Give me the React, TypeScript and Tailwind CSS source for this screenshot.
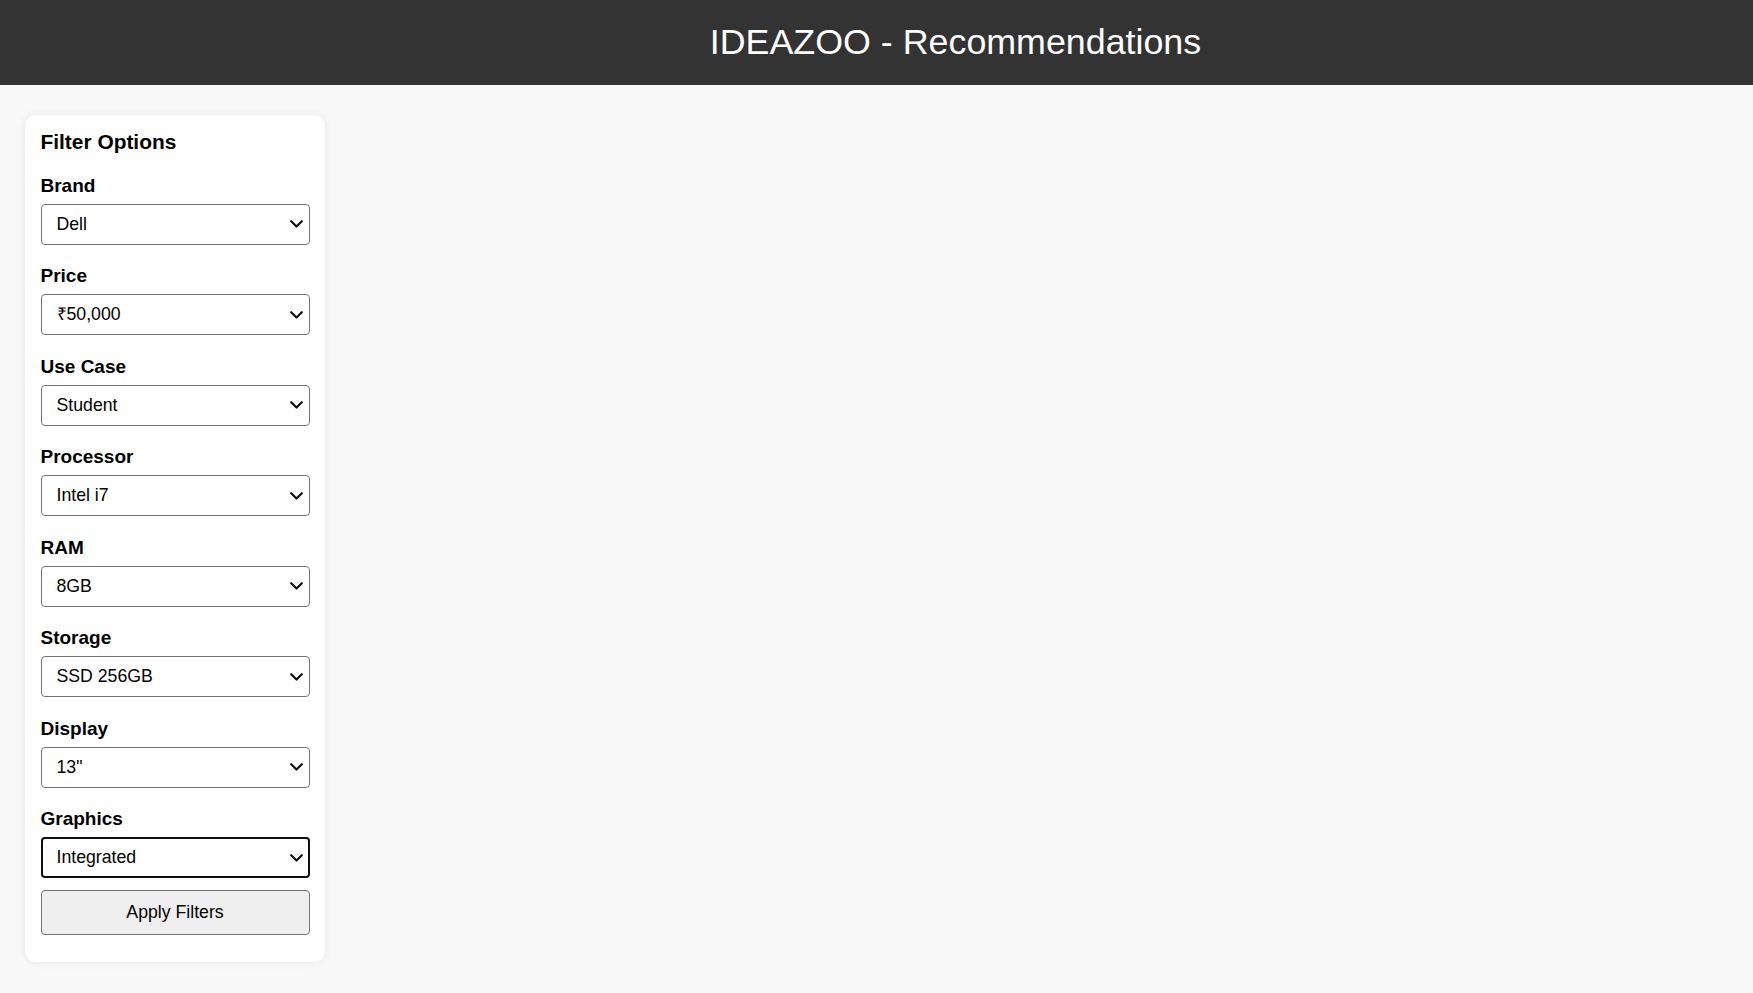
import { useState } from 'react';

interface Filter {
    label: string;
    options: string[];
}

const filters: Filter[] = [
    { label: 'Brand', options: ['Dell', 'HP', 'Lenovo', 'Asus', 'Acer', 'Apple'] },
    { label: 'Price', options: ['₹50,000', '₹75,000', '₹1,00,000', '₹1,50,000'] },
    { label: 'Use Case', options: ['Student', 'Gaming', 'Business', 'Creative'] },
    { label: 'Processor', options: ['Intel i7', 'Intel i5', 'Intel i3', 'AMD Ryzen 5', 'AMD Ryzen 7'] },
    { label: 'RAM', options: ['8GB', '16GB', '32GB'] },
    { label: 'Storage', options: ['SSD 256GB', 'SSD 512GB', 'SSD 1TB'] },
    { label: 'Display', options: ['13"', '14"', '15.6"', '17"'] },
    { label: 'Graphics', options: ['Integrated', 'Dedicated'] },
];

function Chevron() {
    return (
        <svg
            className="pointer-events-none absolute right-[7px] top-1/2 -translate-y-1/2"
            width="13"
            height="8"
            viewBox="0 0 13 8"
            fill="none"
        >
            <path d="M1.2 1.2 L6.5 6.5 L11.8 1.2" stroke="#111" strokeWidth="2.2" strokeLinecap="round" strokeLinejoin="round" />
        </svg>
    );
}

export default function App() {
    const [values, setValues] = useState<Record<string, string>>(
        Object.fromEntries(filters.map(f => [f.label, f.options[0]]))
    );

    return (
        <div className="min-h-screen bg-[#f8f8f8] text-black" style={{ fontFamily: '"Liberation Sans", Arial, sans-serif' }}>
            <header className="h-[85px] bg-[#333333] flex items-center justify-center pl-[158px]">
                <h1 className="text-[35.8px] font-normal text-white leading-none">IDEAZOO - Recommendations</h1>
            </header>

            <main className="pt-[30px] pl-[25px]">
                {/* Filter sidebar */}
                <aside className="w-[300px] bg-white rounded-[11px] shadow-[0_0_10px_rgba(0,0,0,0.08)] px-[15.5px] pt-[15px] pb-[27px]">
                    <h3 className="text-[20.9px] font-bold leading-[24px] mb-[20.5px]">Filter Options</h3>

                    {filters.map((f, i) => {
                        const focused = i === filters.length - 1;
                        return (
                            <div key={f.label} className={focused ? 'mb-[12px]' : 'mb-[20.5px]'}>
                                <label className="block text-[19px] font-bold leading-[22px] mb-[7px]">{f.label}</label>
                                <div className="relative">
                                    <select
                                        value={values[f.label]}
                                        onChange={e => setValues({ ...values, [f.label]: e.target.value })}
                                        className={`block w-full h-[41px] appearance-none bg-white rounded-[4px] text-[17.7px] text-black outline-none ${focused ? 'border-2 border-[#101010] pl-[14px]' : 'border border-[#767676] pl-[15px]'}`}
                                        style={{ fontFamily: '"Liberation Sans", Arial, sans-serif' }}
                                    >
                                        {f.options.map(o => <option key={o} value={o}>{o}</option>)}
                                    </select>
                                    <Chevron />
                                </div>
                            </div>
                        );
                    })}

                    <button
                        className="block w-full h-[45px] bg-[#efefef] border border-[#767676] rounded-[4px] text-[17.7px] text-black"
                        style={{ fontFamily: '"Liberation Sans", Arial, sans-serif' }}
                    >
                        Apply Filters
                    </button>
                </aside>
            </main>
        </div>
    );
}
